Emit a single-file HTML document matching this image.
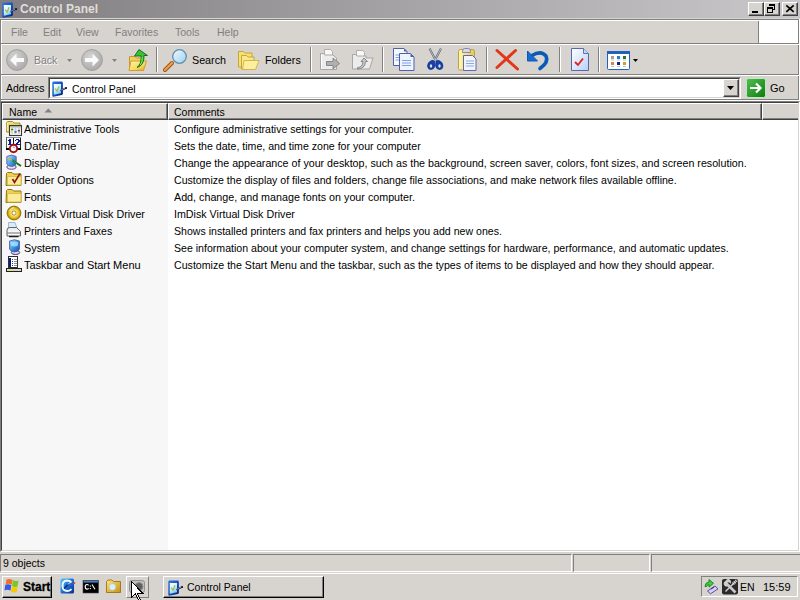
<!DOCTYPE html>
<html><head><meta charset="utf-8"><style>
*{margin:0;padding:0;box-sizing:border-box}
html,body{width:800px;height:600px;overflow:hidden;background:#d7d4cf;font-family:"Liberation Sans",sans-serif;font-size:11px;color:#000;position:relative}
.a{position:absolute}
.h{position:absolute;height:1px}
.v{position:absolute;width:1px}
.t{position:absolute;white-space:nowrap;line-height:13px}
.sx{transform:scaleX(0.955);transform-origin:0 0}
.btn{position:absolute;background:#d7d4cf;border-top:1px solid #fff;border-left:1px solid #fff;border-right:1px solid #404040;border-bottom:1px solid #404040}
.btn:after{content:"";position:absolute;left:0;top:0;right:0;bottom:0;border-right:1px solid #808080;border-bottom:1px solid #808080}
svg{position:absolute;overflow:visible}
</style></head><body>
<div class="a" style="left:0;top:0;width:800px;height:18px;background:linear-gradient(to right,#807e80,#c9c7c9)"></div>
<div class="t" style="left:20px;top:2px;font-weight:bold;font-size:12px;line-height:14px;color:#e0ded8">Control Panel</div>
<svg style="left:0px;top:1px" width="16" height="16" viewBox="0 0 16 16"><defs><linearGradient id="gcp1" x1="0" y1="0" x2="0.6" y2="1"><stop offset="0" stop-color="#ffffff"/><stop offset="0.5" stop-color="#d0f4ff"/><stop offset="1" stop-color="#70d0f8"/></linearGradient>
<linearGradient id="gcp1b" x1="0" y1="0" x2="1" y2="1"><stop offset="0" stop-color="#3078e0"/><stop offset="0.6" stop-color="#1848b8"/><stop offset="1" stop-color="#081858"/></linearGradient></defs>
<path d="M2.3 2.8q0-1 1-1.2h8.2q1.3 0 1.4 1.2v11q-0.1 1-1 1.3l-8.5 1.6q-1.1 0.1-1.1-1z" fill="url(#gcp1b)"/>
<path d="M3.8 4h7.2v9.3l-7.2 1.4z" fill="url(#gcp1)"/>
<path d="M5 8.5l2 2.8l2-5" fill="none" stroke="#a8b848" stroke-width="1.2"/>
<path d="M6 9.2l1 1.5" stroke="#e8a040" stroke-width="0.9"/>
<path d="M10.5 10.8l6-3" stroke="#282858" stroke-width="1.8"/>
<path d="M11 10.2l4-2" stroke="#a0b8f0" stroke-width="0.6"/>
<circle cx="16.2" cy="8" r="0.9" fill="#301020"/>
</svg>
<div class="btn" style="left:748px;top:2px;width:16px;height:14px"></div>
<div class="btn" style="left:764px;top:2px;width:16px;height:14px"></div>
<div class="btn" style="left:782px;top:2px;width:16px;height:14px"></div>
<svg style="left:748px;top:2px" width="50" height="14" viewBox="748 2 50 14" shape-rendering="crispEdges">
<rect x="752" y="11" width="6" height="2" fill="#000"/>
<rect x="769" y="4" width="6" height="2" fill="#000"/><rect x="774" y="6" width="1" height="4" fill="#000"/><rect x="772" y="9" width="2" height="1" fill="#000"/>
<rect x="767" y="7" width="6" height="2" fill="#000"/><rect x="767" y="9" width="1" height="4" fill="#000"/><rect x="772" y="9" width="1" height="4" fill="#000"/><rect x="767" y="12" width="6" height="1" fill="#000"/>
</svg>
<svg style="left:782px;top:2px" width="16" height="14" viewBox="782 2 16 14">
<path d="M786.3 5.3l7.4 6.6M793.7 5.3l-7.4 6.6" stroke="#000" stroke-width="1.7"/>
</svg>

<div class="h" style="left:0;top:19px;width:800px;background:#808080"></div>
<div class="h" style="left:1px;top:20px;width:798px;background:#fff"></div>
<div class="v" style="left:0;top:19px;height:82px;background:#808080"></div>
<div class="v" style="left:1px;top:20px;height:80px;background:#fff"></div>
<div class="v" style="left:798px;top:19px;height:81px;background:#808080"></div>
<div class="v" style="left:799px;top:19px;height:82px;background:#fff"></div>
<div class="h" style="left:1px;top:43px;width:798px;background:#808080"></div>
<div class="h" style="left:1px;top:44px;width:798px;background:#fff"></div>
<div class="h" style="left:1px;top:74px;width:798px;background:#808080"></div>
<div class="h" style="left:1px;top:75px;width:798px;background:#fff"></div>
<div class="h" style="left:1px;top:99px;width:798px;background:#808080"></div>
<div class="h" style="left:1px;top:100px;width:798px;background:#fff"></div>
<div class="t sx" style="left:11px;top:26px;color:#808080">File</div>
<div class="t sx" style="left:43px;top:26px;color:#808080">Edit</div>
<div class="t sx" style="left:76px;top:26px;color:#808080">View</div>
<div class="t sx" style="left:115px;top:26px;color:#808080">Favorites</div>
<div class="t sx" style="left:175px;top:26px;color:#808080">Tools</div>
<div class="t sx" style="left:217px;top:26px;color:#808080">Help</div>
<div class="a" style="left:758px;top:21px;width:40px;height:23px;background:#fff;border-left:1px solid #808080;border-bottom:1px solid #808080"></div>
<svg style="left:0;top:44px" width="660" height="30" viewBox="0 44 660 30">
<defs>
<radialGradient id="gcirc" cx="0.4" cy="0.35" r="0.7"><stop offset="0" stop-color="#d4d4d4"/><stop offset="1" stop-color="#a8a8a8"/></radialGradient>
<linearGradient id="gfold" x1="0" y1="0" x2="1" y2="1"><stop offset="0" stop-color="#fff4a0"/><stop offset="1" stop-color="#e8c040"/></linearGradient>
<linearGradient id="glens" x1="0" y1="0" x2="1" y2="1"><stop offset="0" stop-color="#f0faff"/><stop offset="1" stop-color="#a0d0f0"/></linearGradient>
</defs>
<!-- back -->
<circle cx="17" cy="60" r="10.4" fill="url(#gcirc)" stroke="#a0a0a0" stroke-width="1"/>
<path d="M10 60l6.5-6.5v4.5h7.5v4h-7.5v4.5z" fill="#fafafa"/>
<path d="M67 59h5l-2.5 3z" fill="#808080"/>
<!-- forward -->
<circle cx="92" cy="60" r="10.4" fill="url(#gcirc)" stroke="#a0a0a0" stroke-width="1"/>
<path d="M99 60l-6.5-6.5v4.5h-7.5v4h7.5v4.5z" fill="#fafafa"/>
<path d="M112 59h5l-2.5 3z" fill="#808080"/>
<!-- up folder -->
<defs><linearGradient id="gup" x1="0" y1="0" x2="1" y2="1"><stop offset="0" stop-color="#fff8b0"/><stop offset="0.6" stop-color="#f8d858"/><stop offset="1" stop-color="#e0a020"/></linearGradient></defs>
<path d="M129.5 56.5h5.5l1.5 1.5h6.5v12.5h-13.5z" fill="#f0d060" stroke="#c89020" stroke-width="0.9"/>
<path d="M131 61h15.5l-3 9.5h-14.5z" fill="url(#gup)" stroke="#d09828" stroke-width="0.9"/>
<path d="M137 67.5q4.5-3 4.2-11.5h-6.7l4.5-6.5l8.5 6h-3.5q0.5 9.5-7 12z" fill="#38c038" stroke="#0a6a0a" stroke-width="0.9" stroke-linejoin="round"/>
<path d="M142.3 57q0.3 5-2 8" stroke="#90f090" stroke-width="0.8" fill="none"/>
<!-- separator -->
<rect x="156" y="47" width="1" height="25" fill="#808080"/><rect x="157" y="47" width="1" height="25" fill="#fff"/>
<!-- search -->
<path d="M165 70l7-7" stroke="#a05010" stroke-width="4" stroke-linecap="round"/>
<path d="M165 70l7-7" stroke="#f0a050" stroke-width="2.2" stroke-linecap="round"/>
<circle cx="179.5" cy="56.5" r="6.8" fill="url(#glens)" stroke="#6090b0" stroke-width="1.3"/>
<!-- folders -->
<path d="M238.5 51.5h5l1.5 1.5h7v14h-13.5z" fill="#f8e070" stroke="#c0a030" stroke-width="0.9"/>
<path d="M241.5 55.5h5l1.5 1.5h6v12h-12.5z" fill="#fae888" stroke="#c0a030" stroke-width="0.9"/>
<path d="M244 60.5h15l-3.5 9h-13z" fill="#fcf0a0" stroke="#d0b040" stroke-width="0.9"/>
<!-- separator -->
<rect x="310" y="47" width="1" height="25" fill="#808080"/><rect x="311" y="47" width="1" height="25" fill="#fff"/>
<!-- move to (disabled) -->
<path d="M324.5 49.5h6l2 2v6h-8z" fill="#f8f8f8" stroke="#a8a8a8" stroke-width="0.9"/>
<path d="M320.5 53.5h3l1.5 1.5h8l3.5 3v11.5h-16z" fill="#ececec" stroke="#a0a0a0" stroke-width="0.9"/>
<path d="M321.5 55v14" stroke="#fff" stroke-width="1"/>
<path d="M326.5 61.5h6.5v-3.5l6.5 5.5l-6.5 5.5v-3.5h-6.5z" fill="#b0b0b0" stroke="#808080" stroke-width="0.9"/>
<!-- copy to (disabled) -->
<path d="M356.5 50.5h6l2 2v5h-8z" fill="#f8f8f8" stroke="#a8a8a8" stroke-width="0.9"/>
<path d="M352.5 54.5h3l1.5 1.5h9v2h7l-3.5 11h-17z" fill="#ececec" stroke="#a0a0a0" stroke-width="0.9"/>
<path d="M357.5 67.5q5 0 5.5-6h-2l3-3.5l3.5 3.5h-2q-0.5 7.5-8 7.5z" fill="#c8c8c8" stroke="#808080" stroke-width="0.9"/>
<!-- separator -->
<rect x="382" y="47" width="1" height="25" fill="#808080"/><rect x="383" y="47" width="1" height="25" fill="#fff"/>
<!-- copy -->
<path d="M393.5 48.5h10.5l3 3v14h-13.5z" fill="#f4f8ff" stroke="#5060a8" stroke-width="1"/>
<path d="M404 48.5v3h3z" fill="#5060b0"/>
<path d="M395.5 55h5M395.5 57.5h5M395.5 60h5" stroke="#80a0e0" stroke-width="1"/>
<path d="M399.5 53.5h11l3.5 3.5v13.5h-14.5z" fill="#eef4ff" stroke="#5060a8" stroke-width="1"/>
<path d="M410.5 53.5v3.5h3.5z" fill="#5060b0"/>
<path d="M402 60.5h9M402 63h9M402 65.5h9" stroke="#80a0e0" stroke-width="1"/>
<!-- cut -->
<path d="M429.5 48.5l6 11.5M441 48.5l-6 11.5" stroke="#506070" stroke-width="2"/>
<path d="M429.5 48.5l6 11.5M441 48.5l-6 11.5" stroke="#e8e8f0" stroke-width="0.7"/>
<path d="M434.5 61q-1-1-3-0.5q-4 1.5-4 5.5q0.5 4 4 3.5q3-0.5 3.5-4z" fill="#1840a8" stroke="#0a2a80" stroke-width="0.6"/>
<path d="M436 61q1-1 3-0.5q4 1.5 4 5.5q-0.5 4-4 3.5q-3-0.5-3.5-4z" fill="#1840a8" stroke="#0a2a80" stroke-width="0.6"/>
<ellipse cx="431" cy="66" rx="1.2" ry="1.8" fill="#d8e4ff"/><ellipse cx="439.5" cy="66" rx="1.2" ry="1.8" fill="#d8e4ff"/>
<!-- paste -->
<defs><linearGradient id="gclip" x1="0" y1="0" x2="1" y2="0"><stop offset="0" stop-color="#fff8b0"/><stop offset="1" stop-color="#e8c848"/></linearGradient></defs>
<path d="M458.5 51.5q0-2 2-2h12q2 0 2 2v17q0 1.5-1.5 1.5h-13q-1.5 0-1.5-1.5z" fill="url(#gclip)" stroke="#c0a040" stroke-width="1"/>
<path d="M462.5 51.5q0-3 2-3h4q2 0 2 3v1h-8z" fill="#d8d8e8" stroke="#8080a0" stroke-width="0.9"/>
<path d="M463.5 55.5h9l3.5 3.5v11.5h-12.5z" fill="#f0f4ff" stroke="#6068a8" stroke-width="1"/>
<path d="M466 61h8M466 63.5h8M466 66h8" stroke="#90a8e0" stroke-width="1"/>
<!-- separator -->
<rect x="486" y="47" width="1" height="25" fill="#808080"/><rect x="487" y="47" width="1" height="25" fill="#fff"/>
<!-- delete -->
<path d="M497 50.5l20.5 18.5M515.5 50.5l-18.5 17" stroke="#e03818" stroke-width="3" stroke-linecap="round"/>
<!-- undo -->
<path d="M532 55.5q9-5.5 14 0.5q3 6-6 12.5" fill="none" stroke="#0a5ab8" stroke-width="3.6" stroke-linecap="round"/>
<path d="M527.5 51v10h10z" fill="#1a6ad0" stroke="#0a5ab8" stroke-width="1" stroke-linejoin="round"/>
<!-- separator -->
<rect x="559" y="47" width="1" height="25" fill="#808080"/><rect x="560" y="47" width="1" height="25" fill="#fff"/>
<!-- properties -->
<defs><linearGradient id="gprop" x1="0" y1="0" x2="1" y2="1"><stop offset="0" stop-color="#ffffff"/><stop offset="1" stop-color="#b8d0f8"/></linearGradient></defs><path d="M571.5 48.5h12l5 5v17h-17z" fill="url(#gprop)" stroke="#5868b0" stroke-width="1"/>
<path d="M583.5 48.5v5h5" fill="#c8d8f0" stroke="#6070b0" stroke-width="1"/>
<path d="M575 62l3 3l5-6.5" fill="none" stroke="#e02020" stroke-width="1.8"/>
<!-- separator -->
<rect x="598" y="47" width="1" height="25" fill="#808080"/><rect x="599" y="47" width="1" height="25" fill="#fff"/>
<!-- views -->
<rect x="607.5" y="51.5" width="22" height="18" rx="1" fill="#fff" stroke="#2060c0" stroke-width="1"/>
<rect x="607" y="51" width="23" height="3" fill="#2060c0"/>
<rect x="611" y="56" width="3" height="3" fill="#a0a0a0"/><rect x="617" y="56" width="3" height="3" fill="#2080d0"/><rect x="623" y="56" width="3" height="3" fill="#208020"/>
<rect x="611" y="62" width="3" height="3" fill="#e08050"/><rect x="617" y="62" width="3" height="3" fill="#102880"/><rect x="623" y="62" width="3" height="3" fill="#d0a030"/>
<path d="M611 60h3M617 60h3M623 60h3M611 66.5h3M617 66.5h3M623 66.5h3" stroke="#b0b0c0" stroke-width="0.8"/>
<path d="M633 59h5l-2.5 3z" fill="#000"/>
</svg>
<div class="t sx" style="left:34px;top:54px;color:#808080;text-shadow:1px 1px 0 #fff">Back</div>
<div class="t" style="left:192px;top:54px;transform:scaleX(0.975);transform-origin:0 0">Search</div>
<div class="t" style="left:265px;top:54px;transform:scaleX(0.975);transform-origin:0 0">Folders</div>

<div class="t sx" style="left:6px;top:82px">Address</div>
<div class="a" style="left:48px;top:77px;width:693px;height:22px;background:#fff;border-top:1px solid #808080;border-left:1px solid #808080;border-right:1px solid #fff;border-bottom:1px solid #fff"></div>
<div class="a" style="left:49px;top:78px;width:691px;height:20px;border-top:1px solid #404040;border-left:1px solid #404040;border-right:1px solid #d7d4cf;border-bottom:1px solid #d7d4cf"></div>
<div class="btn" style="left:723px;top:79px;width:16px;height:18px"></div>
<svg style="left:727px;top:86px" width="7" height="4"><path d="M0 0h7l-3.5 4z" fill="#000"/></svg>
<svg style="left:50px;top:80px" width="16" height="16" viewBox="0 0 16 16"><defs><linearGradient id="gcp2" x1="0" y1="0" x2="0.6" y2="1"><stop offset="0" stop-color="#ffffff"/><stop offset="0.5" stop-color="#d0f4ff"/><stop offset="1" stop-color="#70d0f8"/></linearGradient>
<linearGradient id="gcp2b" x1="0" y1="0" x2="1" y2="1"><stop offset="0" stop-color="#3078e0"/><stop offset="0.6" stop-color="#1848b8"/><stop offset="1" stop-color="#081858"/></linearGradient></defs>
<path d="M2.3 2.8q0-1 1-1.2h8.2q1.3 0 1.4 1.2v11q-0.1 1-1 1.3l-8.5 1.6q-1.1 0.1-1.1-1z" fill="url(#gcp2b)"/>
<path d="M3.8 4h7.2v9.3l-7.2 1.4z" fill="url(#gcp2)"/>
<path d="M5 8.5l2 2.8l2-5" fill="none" stroke="#a8b848" stroke-width="1.2"/>
<path d="M6 9.2l1 1.5" stroke="#e8a040" stroke-width="0.9"/>
<path d="M10.5 10.8l6-3" stroke="#282858" stroke-width="1.8"/>
<path d="M11 10.2l4-2" stroke="#a0b8f0" stroke-width="0.6"/>
<circle cx="16.2" cy="8" r="0.9" fill="#301020"/>
</svg>
<div class="t sx" style="left:72px;top:83px">Control Panel</div>
<svg style="left:746px;top:78px" width="20" height="20" viewBox="0 0 20 20">
<defs><linearGradient id="ggo" x1="0" y1="0" x2="1" y2="1"><stop offset="0" stop-color="#50c050"/><stop offset="1" stop-color="#107a10"/></linearGradient></defs>
<rect x="0.5" y="0.5" width="19" height="19" rx="2" fill="url(#ggo)" stroke="#c0e8c0" stroke-width="1"/>
<path d="M4 10h10M10 5.5l4.5 4.5l-4.5 4.5" fill="none" stroke="#fff" stroke-width="2.2"/>
</svg>

<div class="t" style="left:770px;top:82px">Go</div>
<div class="a" style="left:0;top:101px;width:800px;height:451px;background:#fff;border-top:1px solid #808080;border-left:1px solid #808080;border-right:1px solid #fff;border-bottom:1px solid #fff"></div>
<div class="a" style="left:1px;top:102px;width:798px;height:449px;border-top:1px solid #404040;border-left:1px solid #404040;border-right:1px solid #d7d4cf;border-bottom:1px solid #d7d4cf"></div>
<div class="a" style="left:2px;top:120px;width:166px;height:430px;background:#f7f7f7"></div>
<div class="btn" style="left:2px;top:103px;width:166px;height:17px"></div>
<div class="btn" style="left:168px;top:103px;width:594px;height:17px"></div>
<div class="a" style="left:762px;top:103px;width:36px;height:17px;background:#d7d4cf;border-top:1px solid #fff;border-left:1px solid #fff;border-bottom:1px solid #404040;box-shadow:inset 0 -1px 0 #808080"></div>
<div class="t sx" style="left:9px;top:106px">Name</div>
<svg style="left:44px;top:108px" width="9" height="5"><path d="M0.5 4.5h7.5l-3.75-4z" fill="#808080"/></svg>
<div class="t sx" style="left:174px;top:106px">Comments</div>
<div class="t" style="left:24px;top:123px;transform:scaleX(0.9758);transform-origin:0 0">Administrative Tools</div>
<div class="t" style="left:174px;top:123px;transform:scaleX(0.9550);transform-origin:0 0">Configure administrative settings for your computer.</div>
<div class="t" style="left:24px;top:140px;transform:scaleX(1.0384);transform-origin:0 0">Date/Time</div>
<div class="t" style="left:174px;top:140px;transform:scaleX(0.9629);transform-origin:0 0">Sets the date, time, and time zone for your computer</div>
<div class="t" style="left:24px;top:157px;transform:scaleX(0.9839);transform-origin:0 0">Display</div>
<div class="t" style="left:174px;top:157px;transform:scaleX(0.9704);transform-origin:0 0">Change the appearance of your desktop, such as the background, screen saver, colors, font sizes, and screen resolution.</div>
<div class="t" style="left:24px;top:174px;transform:scaleX(0.9693);transform-origin:0 0">Folder Options</div>
<div class="t" style="left:174px;top:174px;transform:scaleX(0.9608);transform-origin:0 0">Customize the display of files and folders, change file associations, and make network files available offline.</div>
<div class="t" style="left:24px;top:191px;transform:scaleX(0.9932);transform-origin:0 0">Fonts</div>
<div class="t" style="left:174px;top:191px;transform:scaleX(0.9755);transform-origin:0 0">Add, change, and manage fonts on your computer.</div>
<div class="t" style="left:24px;top:208px;transform:scaleX(0.9713);transform-origin:0 0">ImDisk Virtual Disk Driver</div>
<div class="t" style="left:174px;top:208px;transform:scaleX(0.9715);transform-origin:0 0">ImDisk Virtual Disk Driver</div>
<div class="t" style="left:24px;top:225px;transform:scaleX(0.9550);transform-origin:0 0">Printers and Faxes</div>
<div class="t" style="left:174px;top:225px;transform:scaleX(0.9609);transform-origin:0 0">Shows installed printers and fax printers and helps you add new ones.</div>
<div class="t" style="left:24px;top:242px;transform:scaleX(0.9839);transform-origin:0 0">System</div>
<div class="t" style="left:174px;top:242px;transform:scaleX(0.9620);transform-origin:0 0">See information about your computer system, and change settings for hardware, performance, and automatic updates.</div>
<div class="t" style="left:24px;top:259px;transform:scaleX(0.9984);transform-origin:0 0">Taskbar and Start Menu</div>
<div class="t" style="left:174px;top:259px;transform:scaleX(0.9659);transform-origin:0 0">Customize the Start Menu and the taskbar, such as the types of items to be displayed and how they should appear.</div>
<svg style="left:6px;top:120px" width="17" height="17" viewBox="0 0 17 17">
<path d="M0.5 2.5l1-1h5l1.5 1.5h6v9h-13.5z" fill="#f0dc70" stroke="#9a8420" stroke-width="0.9"/>
<path d="M1.3 3v8" stroke="#fff8c0" stroke-width="0.8"/>
<rect x="3.5" y="5.5" width="12" height="10" fill="#f4f4f0" stroke="#383838" stroke-width="1.1"/>
<rect x="4.2" y="6.2" width="10.6" height="1.2" fill="#88a888"/>
<rect x="5.2" y="8" width="1.8" height="6" fill="#e0d8a0"/><rect x="5" y="8.8" width="2.2" height="1.4" fill="#3a7a3a"/>
<rect x="8.6" y="8" width="1.8" height="6" fill="#b8d0e8"/><rect x="8.4" y="11.2" width="2.2" height="1.4" fill="#305890"/>
<rect x="12" y="8" width="1.8" height="6" fill="#d0c8d8"/><rect x="11.8" y="10" width="2.2" height="1.4" fill="#604868"/>
</svg>
<svg style="left:6px;top:137px" width="17" height="17" viewBox="0 0 17 17" shape-rendering="crispEdges">
<rect x="0" y="0" width="15" height="12" fill="#f8f8f8"/>
<rect x="0" y="0" width="15" height="1" fill="#909090"/>
<rect x="0" y="0" width="1" height="12" fill="#606060"/>
<rect x="14" y="1" width="1" height="11" fill="#202020"/>
<rect x="7" y="1" width="1" height="8" fill="#101010"/>
<rect x="0" y="11" width="15" height="1.5" fill="#000"/>
<rect x="3" y="2" width="2" height="1" fill="#0a1a9a"/><rect x="2" y="3" width="3" height="1" fill="#0a1a9a"/><rect x="3" y="4" width="2" height="1" fill="#0a1a9a"/><rect x="3" y="5" width="2" height="1" fill="#0a1a9a"/><rect x="3" y="6" width="2" height="1" fill="#0a1a9a"/><rect x="2" y="7" width="4" height="1" fill="#0a1a9a"/>
<rect x="10" y="2" width="3" height="1" fill="#0a1a9a"/><rect x="9" y="3" width="1" height="1" fill="#0a1a9a"/><rect x="12" y="3" width="2" height="1" fill="#0a1a9a"/><rect x="12" y="4" width="2" height="1" fill="#0a1a9a"/><rect x="11" y="5" width="2" height="1" fill="#0a1a9a"/><rect x="10" y="6" width="2" height="1" fill="#0a1a9a"/><rect x="9" y="7" width="5" height="1" fill="#0a1a9a"/>
<circle cx="7.5" cy="11.5" r="3.7" fill="#fff" stroke="#a81010" stroke-width="1.9" shape-rendering="auto"/>
<path d="M7.3 9.6l1.3 1.6" stroke="#705050" stroke-width="0.9" shape-rendering="auto"/>
</svg>
<svg style="left:6px;top:154px" width="17" height="17" viewBox="0 0 17 17">
<defs><linearGradient id="gdisp" x1="0" y1="0" x2="1" y2="1"><stop offset="0" stop-color="#a0e8ff"/><stop offset="0.6" stop-color="#3898e8"/><stop offset="1" stop-color="#2050b0"/></linearGradient></defs>
<ellipse cx="5.5" cy="13" rx="4.6" ry="2.2" fill="#e8e4f4" stroke="#584888" stroke-width="1"/>
<path d="M0.8 2.5q4.7-3 9.4 0v7.5q-1 2-4.7 2.5q-3.7-0.5-4.7-2.5z" fill="url(#gdisp)" stroke="#6858a8" stroke-width="0.9"/>
<path d="M5 5.5l10 6.5" stroke="#1a6a1a" stroke-width="2"/>
<path d="M6 6.2l5 3.2" stroke="#50b050" stroke-width="0.8"/>
<path d="M3 4.5l3 1.8" stroke="#e8b030" stroke-width="1.8"/>
</svg>
<svg style="left:6px;top:171px" width="17" height="17" viewBox="0 0 17 17">
<path d="M0.5 2.5l1-1h4.5l1.5 1.5h7.5v11.5h-15z" fill="#f0d050" stroke="#8a7410"/>
<path d="M1.5 5.5h13.5v8.5h-13.5z" fill="#fcec98" stroke="#d8c050"/>
<path d="M6.5 8l2 3.5l5.5-9" stroke="#901010" stroke-width="1.6" fill="none"/>
</svg>
<svg style="left:6px;top:188px" width="17" height="17" viewBox="0 0 17 17">
<path d="M0.5 2.5l1-1h4.5l1.5 1.5h7.5v11.5h-15z" fill="#f0d050" stroke="#8a7410"/>
<path d="M1.5 5.5h13.5v8.5h-13.5z" fill="#fcec98" stroke="#d8c050"/>
</svg>
<svg style="left:6px;top:205px" width="17" height="17" viewBox="0 0 17 17">
<defs><radialGradient id="gcd" cx="0.5" cy="0.5" r="0.5"><stop offset="0.3" stop-color="#fff0a0"/><stop offset="0.7" stop-color="#e8c020"/><stop offset="1" stop-color="#b08800"/></radialGradient></defs>
<circle cx="8" cy="8" r="6.9" fill="url(#gcd)" stroke="#8a6a00" stroke-width="0.9"/>
<path d="M3.5 6q1.5-3 4.5-3.5" stroke="#fff8c0" stroke-width="1" fill="none"/>
<circle cx="8" cy="8" r="2.1" fill="#fff" stroke="#a08020" stroke-width="0.9"/>
</svg>
<svg style="left:6px;top:222px" width="17" height="17" viewBox="0 0 17 17">
<path d="M2.5 0.5h6.5l2 5.5h-8.5z" fill="#d8ecfa" stroke="#98b0c8" stroke-width="0.9"/>
<path d="M1 8q0-2.5 3-2.5h6.5l4 4v4.5h-13.5z" fill="#ececec" stroke="#585858" stroke-width="0.9"/>
<path d="M2 9h11" stroke="#fff" stroke-width="1"/>
<path d="M1 11h13.5" stroke="#707070" stroke-width="0.9"/>
<path d="M2 12.5h11" stroke="#fff" stroke-width="0.8"/>
<path d="M3 14.6h9.5" stroke="#202020" stroke-width="1.3"/>
</svg>
<svg style="left:6px;top:239px" width="17" height="17" viewBox="0 0 17 17">
<defs><linearGradient id="gsys" x1="0" y1="0" x2="1" y2="1"><stop offset="0" stop-color="#a8e0ff"/><stop offset="0.55" stop-color="#3890e0"/><stop offset="1" stop-color="#1848a0"/></linearGradient></defs>
<ellipse cx="9.5" cy="13.5" rx="4.2" ry="2" fill="#e0dcf0" stroke="#403070" stroke-width="1"/>
<path d="M3.5 2q5-2.5 10 0v8q-1 2.5-5 3q-4-0.5-5-3z" fill="url(#gsys)" stroke="#4858a0" stroke-width="0.8"/>
<path d="M5 3.5q3.5-1.5 7 0v3q-3.5 2-7 0z" fill="#b8e8ff" opacity="0.7"/>
</svg>
<svg style="left:6px;top:256px" width="17" height="17" viewBox="0 0 17 17" shape-rendering="crispEdges">
<rect x="2.5" y="0.5" width="9" height="11" fill="#fff" stroke="#303030"/>
<rect x="3" y="2" width="2" height="9" fill="#0a1a80"/>
<rect x="6" y="3" width="1" height="1" fill="#2040a0"/><rect x="8" y="3" width="3" height="1" fill="#909090"/>
<rect x="6" y="5" width="1" height="1" fill="#2040a0"/><rect x="8" y="5" width="3" height="1" fill="#909090"/>
<rect x="6" y="7" width="1" height="1" fill="#2040a0"/><rect x="8" y="7" width="3" height="1" fill="#909090"/>
<rect x="6" y="9" width="1" height="1" fill="#2040a0"/><rect x="8" y="9" width="3" height="1" fill="#909090"/>
<rect x="0.5" y="12.5" width="15" height="3" fill="#d8d8c8" stroke="#202020"/>
<rect x="2" y="13" width="4" height="2" fill="#e0e080"/>
</svg>

<div class="a" style="left:0;top:554px;width:572px;height:18px;border-top:1px solid #808080;border-left:1px solid #808080;border-bottom:1px solid #fff;border-right:1px solid #fff"></div>
<div class="a" style="left:573px;top:554px;width:77px;height:18px;border-top:1px solid #808080;border-left:1px solid #808080;border-bottom:1px solid #fff;border-right:1px solid #fff"></div>
<div class="a" style="left:651px;top:554px;width:149px;height:18px;border-top:1px solid #808080;border-left:1px solid #808080;border-bottom:1px solid #fff"></div>
<div class="t sx" style="left:3px;top:557px">9 objects</div>
<div class="h" style="left:0;top:573px;width:800px;background:#fff"></div>
<div class="btn" style="left:2px;top:576px;width:50px;height:22px;border-right-color:#000;border-bottom-color:#000"></div>
<div class="t" style="left:23px;top:580px;font-weight:bold;font-size:12px;line-height:14px;-webkit-text-stroke:0.3px #000">Start</div>
<div class="a" style="left:126px;top:576px;width:23px;height:22px;border-top:1px solid #fff;border-left:1px solid #fff;border-right:1px solid #808080;border-bottom:1px solid #808080"></div>
<div class="btn" style="left:163px;top:576px;width:161px;height:22px;border-right-color:#000;border-bottom-color:#000"></div>
<div class="t sx" style="left:187px;top:581px">Control Panel</div>
<div class="a" style="left:701px;top:576px;width:97px;height:21px;border-top:1px solid #808080;border-left:1px solid #808080;border-bottom:1px solid #fff;border-right:1px solid #fff"></div>
<div class="t sx" style="left:740px;top:581px">EN</div>
<div class="t" style="left:763px;top:581px">15:59</div>
<svg style="left:166px;top:579px" width="16" height="16" viewBox="0 0 16 16"><defs><linearGradient id="gcp3" x1="0" y1="0" x2="0.6" y2="1"><stop offset="0" stop-color="#ffffff"/><stop offset="0.5" stop-color="#d0f4ff"/><stop offset="1" stop-color="#70d0f8"/></linearGradient>
<linearGradient id="gcp3b" x1="0" y1="0" x2="1" y2="1"><stop offset="0" stop-color="#3078e0"/><stop offset="0.6" stop-color="#1848b8"/><stop offset="1" stop-color="#081858"/></linearGradient></defs>
<path d="M2.3 2.8q0-1 1-1.2h8.2q1.3 0 1.4 1.2v11q-0.1 1-1 1.3l-8.5 1.6q-1.1 0.1-1.1-1z" fill="url(#gcp3b)"/>
<path d="M3.8 4h7.2v9.3l-7.2 1.4z" fill="url(#gcp3)"/>
<path d="M5 8.5l2 2.8l2-5" fill="none" stroke="#a8b848" stroke-width="1.2"/>
<path d="M6 9.2l1 1.5" stroke="#e8a040" stroke-width="0.9"/>
<path d="M10.5 10.8l6-3" stroke="#282858" stroke-width="1.8"/>
<path d="M11 10.2l4-2" stroke="#a0b8f0" stroke-width="0.6"/>
<circle cx="16.2" cy="8" r="0.9" fill="#301020"/>
</svg>
<svg style="left:0;top:572px" width="800" height="28" viewBox="0 572 800 28">
<defs><linearGradient id="gfq" x1="0" y1="0" x2="1" y2="1"><stop offset="0" stop-color="#ffe880"/><stop offset="1" stop-color="#c89010"/></linearGradient>
<linearGradient id="gwin" x1="0" y1="0" x2="1" y2="1"><stop offset="0" stop-color="#40a0ff"/><stop offset="1" stop-color="#1030a0"/></linearGradient></defs>
<!-- windows flag -->
<path d="M6.5 579.5q3-1.2 6 0.5l-0.8 4.5q-3-1.5-6-0.3z" fill="#f07028"/>
<path d="M13 580.2q3 1.5 5.5 0.2l-1 6q-2.5 1.2-5.5-0.5z" fill="#78c820"/>
<path d="M5.3 584.8q3-1.2 6 0.3l-0.8 5.5q-3-1.5-6-0.3z" fill="#3858e8"/>
<path d="M11.8 586.5q3 1.5 5.8 0.2l-0.8 5.3q-2.8 1.2-5.8-0.3z" fill="#f8c800"/>
<!-- quick launch 1 -->
<defs><linearGradient id="gql" x1="0" y1="0" x2="1" y2="1"><stop offset="0" stop-color="#58c8ff"/><stop offset="0.5" stop-color="#2070d8"/><stop offset="1" stop-color="#0a2890"/></linearGradient></defs>
<path d="M60.5 580q0-1.5 1.5-1.5h10.5q1.5 0 1.5 1.5v12q0 1.5-1.5 1.5h-10.5q-1.5 0-1.5-1.5z" fill="url(#gql)"/>
<path d="M71.5 582.5q-1.5-2-4.5-2q-4.5 0.3-4.5 5.5q0.3 5 4.8 5q2.8 0 4.2-2" fill="none" stroke="#e8ffff" stroke-width="2"/>
<path d="M64 588.5l4.5-4.5" stroke="#102868" stroke-width="1.4"/>
<path d="M68 584.5l2-2" stroke="#f0f0ff" stroke-width="1"/>
<circle cx="74.3" cy="583" r="1.1" fill="#d04848"/>
<!-- cmd -->
<rect x="83" y="580.5" width="15.5" height="12.5" fill="#000" stroke="#404050" stroke-width="0.6"/>
<rect x="83.5" y="581" width="14.5" height="1.6" fill="#4080d0"/>
<path d="M88.6 585.3q-0.6-0.8-1.6-0.8q-1.8 0-1.8 2.3q0 2.3 1.8 2.3q1 0 1.6-0.8" fill="none" stroke="#fff" stroke-width="1.1"/>
<rect x="89.8" y="585.5" width="1.1" height="1.1" fill="#fff"/><rect x="89.8" y="588" width="1.1" height="1.1" fill="#fff"/>
<path d="M92 584.5l3 4.8" stroke="#fff" stroke-width="1.1"/>
<!-- explorer folder -->
<path d="M106.5 581.5l1.5-1.5h4l1.5 1.5h7v11h-14z" fill="url(#gfq)" stroke="#a07010" stroke-width="0.9"/>
<circle cx="112.5" cy="587" r="3.3" fill="#d8f0ff" stroke="#a0c0d0" stroke-width="0.5"/>
<!-- hovered quick launch icon -->
<rect x="129.5" y="580.5" width="15" height="12" rx="2" fill="#c0c0c0" stroke="#909090"/>
<circle cx="139" cy="586.5" r="4" fill="#606060" stroke="#909090"/>
<!-- safe remove -->
<path d="M705 586.5q0-4 4-4.5v-2.5l4.5 3.8l-4.5 3.8v-2.5q-2 0.3-2.5 2z" fill="#40d040" stroke="#108010" stroke-width="0.9"/>
<path d="M707.5 591l7.5-5l3 2.8l-7.5 5z" fill="#d8d0f8" stroke="#504090" stroke-width="0.9"/>
<path d="M711 589l3-2" stroke="#3040a0" stroke-width="1.2"/>
<!-- tools -->
<rect x="722" y="579" width="16" height="15.5" rx="2" fill="#2a2a2a"/>
<path d="M726.5 583.5l9 9" stroke="#c8c8c8" stroke-width="2.6"/>
<path d="M723.8 582.5a3 3 0 0 0 4.5 3.5l-1.5-1.5l0.5-1.8l1.8-0.5l1.5 1.5a3 3 0 0 0-3.5-4.5z" fill="#d0d0d0"/>
<path d="M735.5 581.5l-10 10" stroke="#d0d0d0" stroke-width="1.4"/>
<path d="M733 584l3.5-3.5" stroke="#e0e0e0" stroke-width="3" stroke-dasharray="1 1"/>
</svg>

<svg style="left:131px;top:581px" width="13" height="20" viewBox="0 0 13 20" shape-rendering="crispEdges">
<path d="M0.5 0.5v16l4-4l3 7h2l-3-7h5.5z" fill="#fff" stroke="#000" stroke-width="1"/>
</svg>

</body></html>
